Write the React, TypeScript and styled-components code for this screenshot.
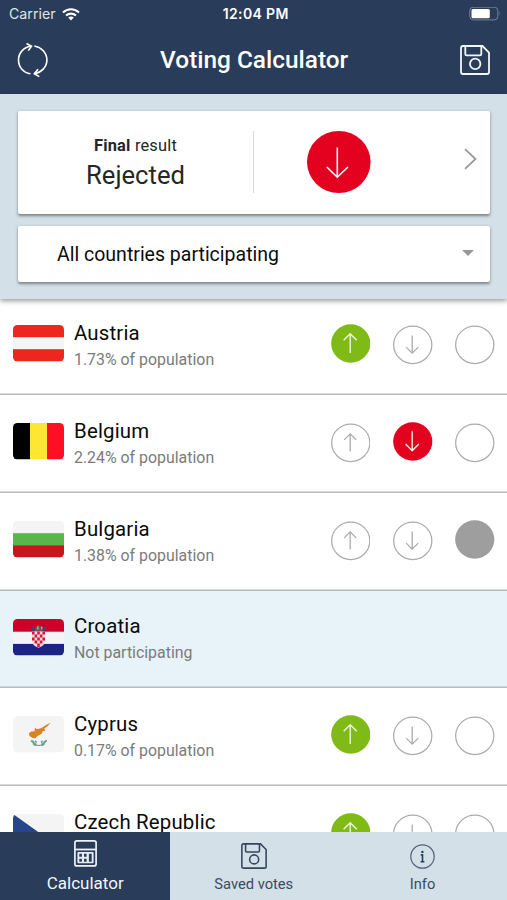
import React from "react";
import styled, { createGlobalStyle } from "styled-components";

const navy = "#293c59";
const mist = "#d3e0e7";

const GlobalStyle = createGlobalStyle`
  *, *::before, *::after { box-sizing: border-box; }
  body { margin: 0; background: #fff; font-family: Roboto, sans-serif; }
  svg { display: block; flex: none; }
`;

const Screen = styled.div`
  width: 507px;
  height: 900px;
  display: flex;
  flex-direction: column;
  overflow: hidden;
  background: #fff;
`;

const Header = styled.header`
  height: 93.5px;
  flex: none;
  background: ${navy};
  color: #fff;
`;

const StatusBar = styled.div`
  height: 28px;
  padding: 0 6px 0 9px;
  display: grid;
  grid-template-columns: 1fr auto 1fr;
  align-items: center;
  font: 400 14.2px/28px Inter, sans-serif;
`;

const Carrier = styled.div`
  display: flex;
  align-items: center;
  gap: 6.5px;
  color: #dfe5ec;
`;

const Clock = styled.div`
  padding-left: 1.5px;
  font-weight: 600;
  font-size: 14px;
  letter-spacing: 0.35px;
`;

const BatterySlot = styled.div`
  display: flex;
  justify-content: flex-end;
`;

const TitleBar = styled.div`
  height: 64px;
  padding: 0 16.7px 0 16px;
  display: grid;
  grid-template-columns: 32px 1fr 30px;
  align-items: center;
`;

const Title = styled.h1`
  margin: 0;
  text-align: center;
  font-size: 24.4px;
  line-height: 30px;
  font-weight: 500;
`;

const Summary = styled.section`
  height: 205.5px;
  flex: none;
  position: relative;
  z-index: 1;
  padding: 17px 17px 0 18px;
  display: flex;
  flex-direction: column;
  gap: 12px;
  background: ${mist};
  box-shadow: 0 2px 5px rgba(0, 0, 0, 0.4);
`;

const Card = styled.div<{ $height: number }>`
  height: ${(p) => p.$height}px;
  display: flex;
  align-items: center;
  background: #fff;
  border-radius: 2px;
  box-shadow: 0 1.5px 3px rgba(0, 0, 0, 0.42);
`;

const Verdict = styled.div`
  width: 235px;
  padding-top: 2px;
  text-align: center;
  color: #262626;
`;

const VerdictLabel = styled.div`
  font-size: 16.4px;
  line-height: 20px;
  letter-spacing: 0.2px;
`;

const VerdictValue = styled.div`
  margin-top: 2.5px;
  font-size: 25.6px;
  line-height: 32px;
`;

const VerdictIcon = styled.div`
  flex: 1;
  height: 62px;
  margin-bottom: 1.5px;
  padding-left: 52.5px;
  border-left: 1px solid #d8d8d8;
`;

const Chevron = styled.div`
  padding: 0 13px 6px 0;
`;

const FilterText = styled.div`
  flex: 1;
  padding: 3px 0 0 39px;
  font-size: 19.5px;
  line-height: 24px;
  color: #0c0c0c;
`;

const Caret = styled.div`
  padding: 0 16px 1px 0;
`;

const List = styled.main`
  flex: 1;
  min-height: 0;
  margin-top: -1.7px;
  overflow: hidden;
`;

const Row = styled.div<{ $muted?: boolean }>`
  height: 97.75px;
  padding: 0 12px 0 13px;
  display: flex;
  align-items: flex-start;
  box-shadow: inset 0 -1.6px 0 #bababa;
  background: ${(p) => (p.$muted ? "#e8f3f9" : "#fff")};
`;

const FlagBox = styled.div`
  margin-top: 28px;
`;

const Names = styled.div`
  flex: 1;
  padding: 23.9px 0 0 10px;
`;

const Name = styled.div`
  font-size: 20.4px;
  line-height: 24px;
  letter-spacing: 0.18px;
  color: #0a0a0a;
`;

const Share = styled.div`
  margin-top: 4.8px;
  font-size: 15.9px;
  line-height: 20px;
  color: #7b7b7b;
`;

const Votes = styled.div`
  display: flex;
  gap: 22.7px;
  padding: 26px 0.2px 0 0;
`;

const TabBar = styled.nav`
  height: 68.5px;
  flex: none;
  position: relative;
  z-index: 2;
  display: grid;
  grid-template-columns: 169.5px 168.5px 1fr;
`;

const Tab = styled.div<{ $active?: boolean }>`
  display: flex;
  flex-direction: column;
  align-items: center;
  justify-content: flex-end;
  gap: ${(p) => (p.$active ? 6.5 : 5)}px;
  padding-bottom: ${(p) => (p.$active ? 6 : 5)}px;
  padding-left: ${(p) => (p.$active ? 1 : 0)}px;
  background: ${(p) => (p.$active ? navy : mist)};
  color: ${(p) => (p.$active ? "#f3f6fa" : "#3b4a62")};
  font-size: ${(p) => (p.$active ? 17 : 14.7)}px;
  line-height: 21px;
`;

type Kind = "up" | "down" | "none";
type Choice = Kind | null;

const fills: Record<Kind, string> = { up: "#7fba16", down: "#e4001f", none: "#9e9e9e" };

function VoteMark({ kind, on }: { kind: Kind; on: boolean }) {
  const cy = on ? 20.5 : 21.8;
  const tone = on ? "#eef5e4" : "#a9a9a9";
  const s = on ? 1.1 : 1;
  return (
    <svg width="39.5" height="42" viewBox="0 0 39.5 42">
      <ellipse
        cx="19.75"
        cy={cy}
        rx={on ? 19.6 : 19.1}
        ry={on ? 19.2 : 18.7}
        fill={on ? fills[kind] : "#fff"}
        stroke={on ? "none" : "#ababab"}
        strokeWidth="1.25"
      />
      {kind !== "none" && (
        <path
          transform={`translate(19.2 ${cy - 0.3}) scale(${s} ${kind === "up" ? s : -s})`}
          d="M0 9V-8.6M-6-2.6L0-8.6L6-2.6"
          fill="none"
          stroke={tone}
          strokeWidth="1.25"
        />
      )}
    </svg>
  );
}

function RejectedMark() {
  return (
    <svg width="64" height="62" viewBox="0 0 64 62">
      <ellipse cx="31.8" cy="31" rx="31.8" ry="31" fill="#e4001f" />
      <path d="M30.3 16.5V46M19.8 36L30.3 46.2L41 36" fill="none" stroke="#fff" strokeWidth="1.6" />
    </svg>
  );
}

function Wifi() {
  return (
    <svg width="18" height="13" viewBox="0 0 18 13" fill="none" stroke="#fff" strokeWidth="2.1">
      <path d="M1 4.6C5.5.2 12.5.2 17 4.6M4 7.6C6.9 4.9 11.1 4.9 14 7.6" />
      <path d="M9 12.4L6.2 9.6C7.8 8.2 10.2 8.2 11.8 9.6Z" fill="#fff" stroke="none" />
    </svg>
  );
}

function Battery() {
  return (
    <svg width="32" height="14" viewBox="0 0 32 14">
      <rect x=".8" y=".2" width="28" height="12.7" rx="3.5" fill="none" stroke="#74839a" />
      <rect x="2.5" y="1.9" width="18.3" height="9.3" rx="1.5" fill="#fff" />
      <path d="M30.2 4.3Q31.7 6.5 30.2 8.7Z" fill="#8290a5" />
    </svg>
  );
}

function Refresh() {
  return (
    <svg width="32" height="36" viewBox="0 0 32 36" fill="none" stroke="#fff" strokeWidth="1.6">
      <path d="M14.5 31.8C7.500 30.800 2.500 25.200 2.500 18C2.500 11 7.500 5.200 14.800 4.200" />
      <path d="M10.500 1.500L15.500 4.200L12.300 8.600" />
      <path d="M18.300 4C25.500 5.200 30.900 10.800 30.900 18C30.900 25 25.300 30.700 18.300 31.700" />
      <path d="M22 27.300L18.300 31.700L23.300 34.600" />
    </svg>
  );
}

function Disk({ size, color, weight }: { size: number; color: string; weight: number }) {
  return (
    <svg width={size} height={size} viewBox="0 0 30 30" fill="none" stroke={color} strokeWidth={weight}>
      <path d="M3 1H22.5L29 7.5V27Q29 29 27 29H3Q1 29 1 27V3Q1 1 3 1Z" />
      <path d="M5.3 1V9Q5.3 10.3 6.6 10.3H20Q21.3 10.3 21.3 9V1" />
      <circle cx="15.2" cy="18.9" r="5.2" />
    </svg>
  );
}

function CalculatorIcon() {
  return (
    <svg width="23" height="27" viewBox="0 0 23 27">
      <rect x=".9" y=".9" width="21.2" height="25" rx="2" fill="none" stroke="#eef2f7" strokeWidth="1.7" />
      <path d="M1 9.5H22" stroke="#eef2f7" strokeWidth="1.8" />
      <rect x="3.4" y="12" width="16.2" height="11.3" rx="1" fill="#e6ebf2" />
      <path
        d="M5.300 13.700h2.600v3H5.300zM10 13.700h2.600v3H10zM5.300 18.700h2.600v3H5.300zM10 18.700h2.600v3H10zM14.900 13.700h2.800v8h-2.800z"
        fill={navy}
      />
    </svg>
  );
}

function InfoIcon() {
  return (
    <svg width="25" height="25" viewBox="0 0 25 25">
      <circle cx="12.5" cy="12.5" r="11.7" fill="none" stroke="#526078" strokeWidth="1.2" />
      <circle cx="12.4" cy="7.9" r="1.2" fill={navy} />
      <path d="M10.8 10.9H12.5V17.6M10.6 17.7H14.4" fill="none" stroke={navy} strokeWidth="1.6" />
    </svg>
  );
}

type Country = "at" | "be" | "bg" | "hr" | "cy" | "cz";

function FlagArt({ code }: { code: Country }) {
  switch (code) {
    case "at":
      return (
        <>
          <rect width="51" height="12.2" fill="#ed2720" />
          <rect y="24.2" width="51" height="12.3" fill="#ed2720" />
        </>
      );
    case "be":
      return (
        <>
          <rect width="17" height="36.5" fill="#000" />
          <rect x="17" width="17" height="36.5" fill="#ffe632" />
          <rect x="34" width="17" height="36.5" fill="#ff0f23" />
        </>
      );
    case "bg":
      return (
        <>
          <rect y="12.2" width="51" height="12" fill="#5ab54b" />
          <rect y="24.2" width="51" height="12.3" fill="#c4161c" />
        </>
      );
    case "hr":
      return (
        <>
          <rect width="51" height="12.7" fill="#cf0027" />
          <rect y="24.9" width="51" height="11.6" fill="#1c2385" />
          <path d="M19 12.5H32V22Q32 26.5 25.5 28.7Q19 26.5 19 22Z" fill="#f3dfe2" />
          <path
            d="M19 12.5h2.6v3H19zM24.2 12.5h2.6v3h-2.6zM29.4 12.5H32v3h-2.6zM21.6 15.5h2.6v3h-2.6zM26.8 15.5h2.6v3h-2.6zM19 18.5h2.6v3H19zM24.2 18.5h2.6v3h-2.6zM29.4 18.5H32v3h-2.6zM21.6 21.5h2.6v3h-2.6zM26.8 21.5h2.6v3h-2.6zM24.2 24.5h2.6v3.6h-2.6z"
            fill="#dc1536"
          />
          <path d="M18.5 7L21 8L22 12H19.5ZM29 12L30 8L32.5 7L31.5 12Z" fill="#34458c" />
          <path d="M22 9L24 6.5L27 6.5L29 9V12H22Z" fill="#6f5263" />
          <path d="M24 7.5h1.5v3H24zM28 7.5h1.5v3H28z" fill="#b4a94b" />
        </>
      );
    case "cy":
      return (
        <>
          <path
            d="M37.6 6.8L34.5 10.2L31.3 12.5L32.3 14.4L29.8 15.3L28.5 17.8L24 20.3L22.5 22.3L19.8 22L16.5 20L15.8 17.4L18 15.5L21.5 15.3L22 11.5L23.8 13.2L28 12.3L33 9Z"
            fill="#dc8125"
          />
          <g fill="#6fa18d">
            <ellipse cx="19.6" cy="25.6" rx="2.2" ry="1.2" transform="rotate(35 19.6 25.6)" />
            <ellipse cx="21.8" cy="28.3" rx="2.4" ry="1.4" transform="rotate(30 21.8 28.3)" />
            <ellipse cx="22.9" cy="25.8" rx="1.3" ry=".9" transform="rotate(60 22.9 25.8)" />
            <ellipse cx="32.2" cy="25.6" rx="2.2" ry="1.2" transform="rotate(-35 32.2 25.6)" />
            <ellipse cx="29.8" cy="28.3" rx="2.4" ry="1.4" transform="rotate(-30 29.8 28.3)" />
            <ellipse cx="28.8" cy="25.8" rx="1.3" ry=".9" transform="rotate(-60 28.8 25.8)" />
            <ellipse cx="25.8" cy="29.4" rx="2" ry=".7" />
          </g>
        </>
      );
    case "cz":
      return (
        <>
          <rect y="18.2" width="51" height="18.3" fill="#d7141a" />
          <path d="M0 0L25.5 18.2L0 36.5Z" fill="#27458b" />
        </>
      );
  }
}

function Flag({ code }: { code: Country }) {
  return (
    <svg width="51" height="37" viewBox="0 0 51 37">
      <clipPath id={`flag-${code}`}>
        <rect width="51" height="36.5" rx="4.5" />
      </clipPath>
      <g clipPath={`url(#flag-${code})`}>
        <rect width="51" height="36.5" fill="#f4f4f4" />
        <FlagArt code={code} />
      </g>
    </svg>
  );
}

const countries: { code: Country; name: string; note?: string; vote: Choice }[] = [
  { code: "at", name: "Austria", note: "1.73% of population", vote: "up" },
  { code: "be", name: "Belgium", note: "2.24% of population", vote: "down" },
  { code: "bg", name: "Bulgaria", note: "1.38% of population", vote: "none" },
  { code: "hr", name: "Croatia", note: "Not participating", vote: null },
  { code: "cy", name: "Cyprus", note: "0.17% of population", vote: "up" },
  { code: "cz", name: "Czech Republic", vote: "up" },
];

const kinds: Kind[] = ["up", "down", "none"];

export default function App() {
  return (
    <Screen>
      <GlobalStyle />
      <Header>
        <StatusBar>
          <Carrier>
            <span>Carrier</span>
            <Wifi />
          </Carrier>
          <Clock>12:04 PM</Clock>
          <BatterySlot>
            <Battery />
          </BatterySlot>
        </StatusBar>
        <TitleBar>
          <Refresh />
          <Title>Voting Calculator</Title>
          <Disk size={30} color="#f2f6fb" weight={1.8} />
        </TitleBar>
      </Header>
      <Summary>
        <Card $height={103.5}>
          <Verdict>
            <VerdictLabel>
              <b>Final</b> result
            </VerdictLabel>
            <VerdictValue>Rejected</VerdictValue>
          </Verdict>
          <VerdictIcon>
            <RejectedMark />
          </VerdictIcon>
          <Chevron>
            <svg width="13" height="22" viewBox="0 0 13 22" fill="none" stroke="#999" strokeWidth="1.8">
              <path d="M1 1.2L11.5 11L1 20.8" />
            </svg>
          </Chevron>
        </Card>
        <Card $height={55.5}>
          <FilterText>All countries participating</FilterText>
          <Caret>
            <svg width="12" height="6" viewBox="0 0 12 6">
              <path d="M0 0H12L6 6Z" fill="#979797" />
            </svg>
          </Caret>
        </Card>
      </Summary>
      <List>
        {countries.map((c) => (
          <Row key={c.code} $muted={c.vote === null}>
            <FlagBox>
              <Flag code={c.code} />
            </FlagBox>
            <Names>
              <Name>{c.name}</Name>
              {c.note && <Share>{c.note}</Share>}
            </Names>
            {c.vote !== null && (
              <Votes>
                {kinds.map((k) => (
                  <VoteMark key={k} kind={k} on={c.vote === k} />
                ))}
              </Votes>
            )}
          </Row>
        ))}
      </List>
      <TabBar>
        <Tab $active>
          <CalculatorIcon />
          Calculator
        </Tab>
        <Tab>
          <Disk size={26} color="#35455e" weight={1.8} />
          Saved votes
        </Tab>
        <Tab>
          <InfoIcon />
          Info
        </Tab>
      </TabBar>
    </Screen>
  );
}
